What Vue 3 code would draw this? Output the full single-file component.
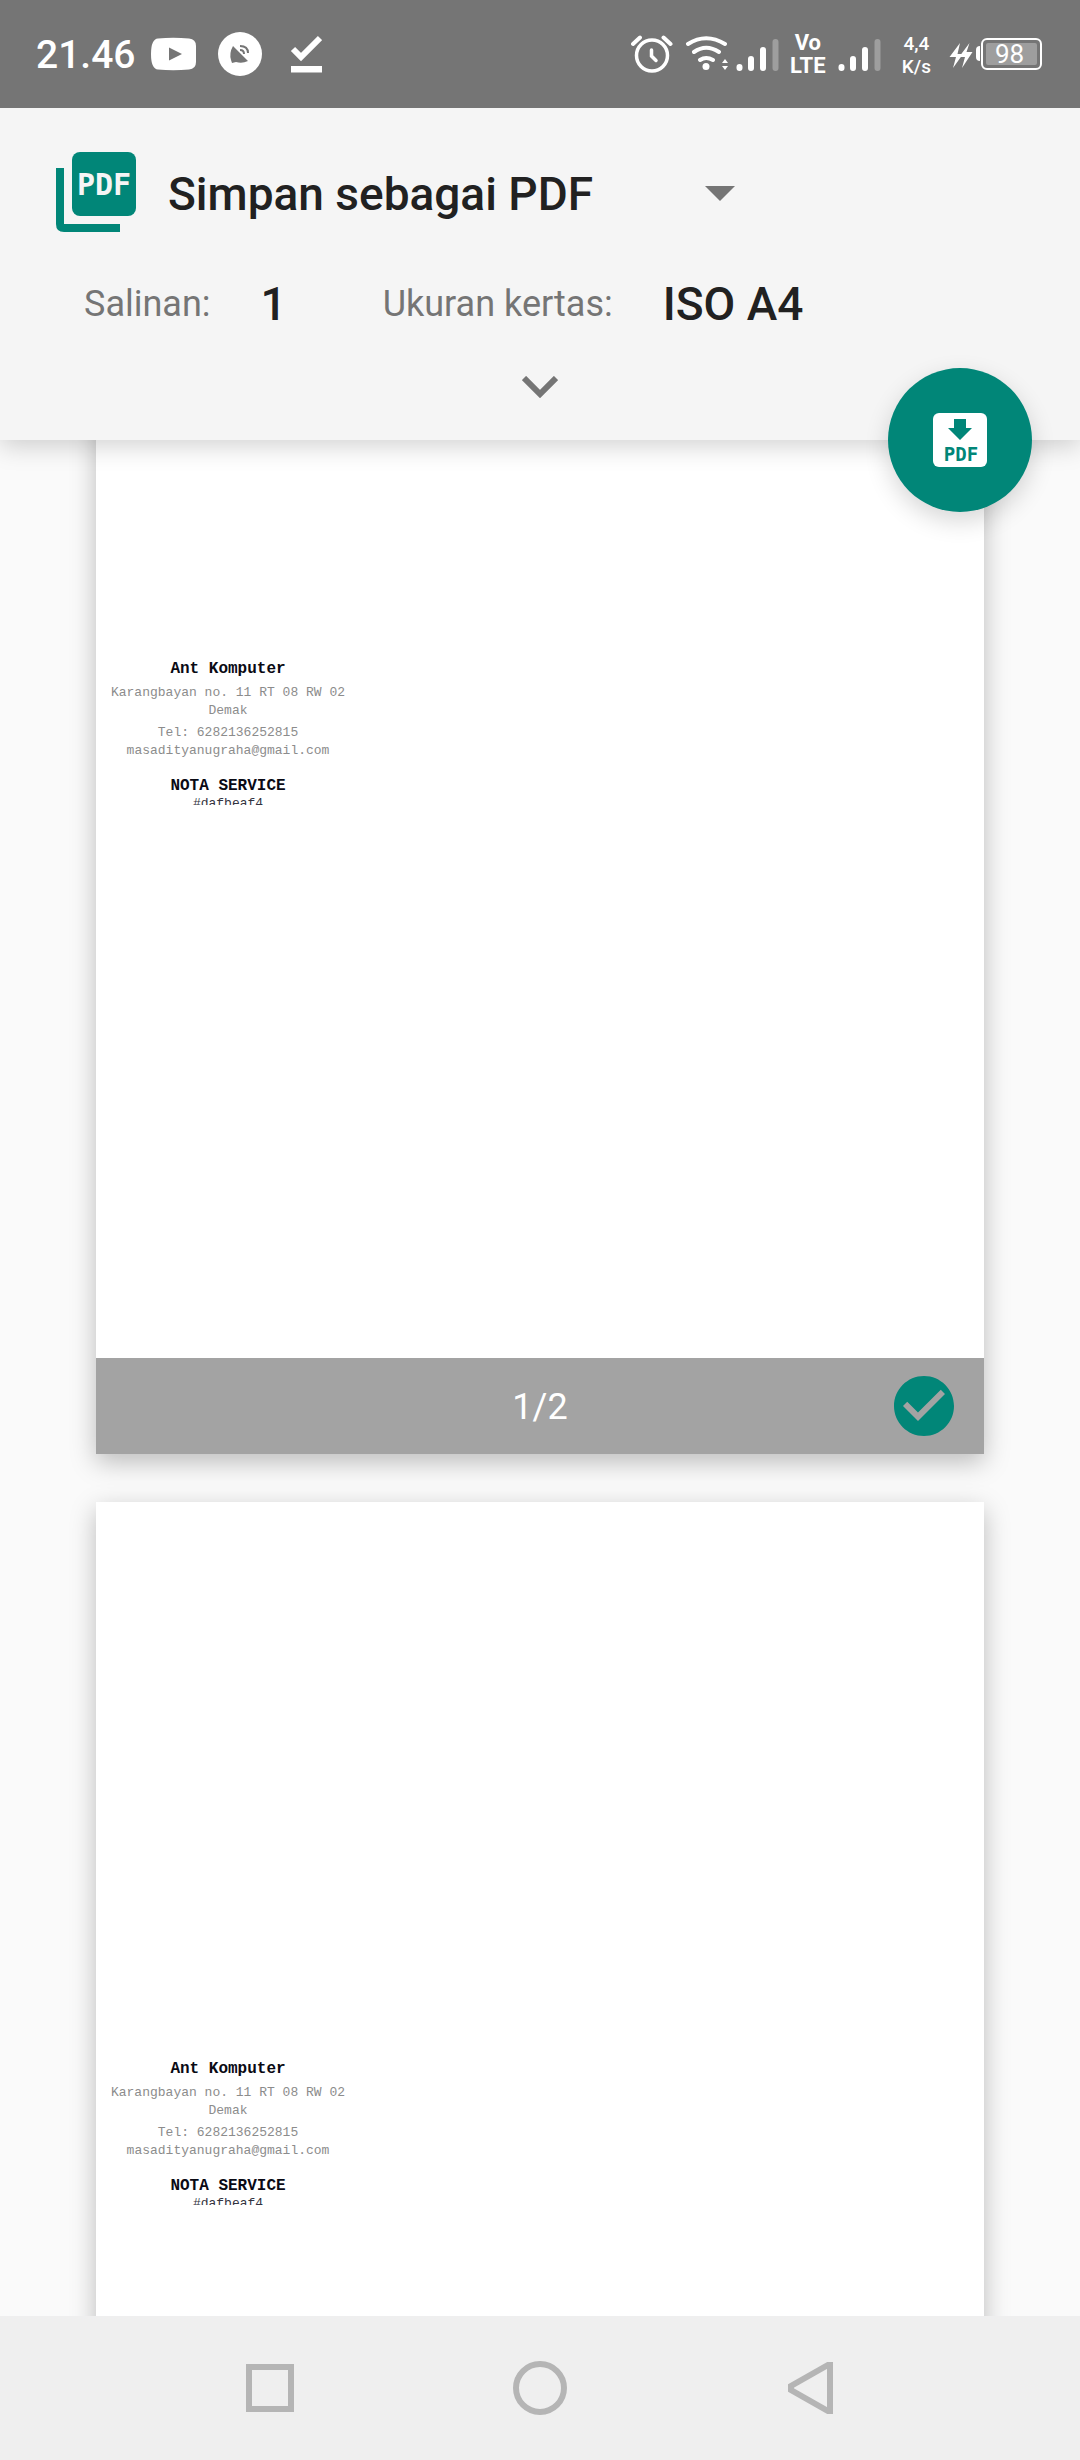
<script setup>
import { ref } from 'vue'

const destination = ref('Simpan sebagai PDF')
const pages = ref([
  { number: 1, selected: true },
  { number: 2, selected: true },
])
</script>

<template>
  <div class="screen">
    <div class="status-bar">
      <div class="status-left">
        <time class="clock">21.46</time>
        <svg class="i-video" width="46" height="44" viewBox="150 32 46 44">
          <path fill="#fff" fill-rule="evenodd" d="M158 38.500Q173 37 189 38.500Q196 39 196 46V62Q196 69 189 69.500Q173 71 158 69.500Q151 69 151 54Q151 39 158 38.500ZM169 47.500V60.500L182 54Z" />
        </svg>
        <svg class="i-satellite" width="44" height="44" viewBox="218 32 44 44">
          <circle cx="240" cy="54" r="22" fill="#fff" />
          <path fill="#757575" d="M233 46L248 61Q242 64 236 62L232 63L231 60Q229 53 233 46Z" />
          <path d="M240 50Q244 50 244 54M240 46Q248 46 248 53" fill="none" stroke="#757575" stroke-width="2" />
        </svg>
        <svg class="i-done" width="32" height="44" viewBox="290 32 32 44">
          <path d="M293 49L301 57L320 38" fill="none" stroke="#fff" stroke-width="6" />
          <path fill="#fff" d="M291 66h31v6.500h-31z" />
        </svg>
      </div>
      <div class="status-right">
        <svg width="42" height="44" viewBox="632 32 42 44" fill="none" stroke="#fff">
          <circle cx="653" cy="55.500" r="15.500" stroke-width="3.500" />
          <path d="M652.500 50V56L657 60.500" stroke-width="3.500" stroke-linecap="round" />
          <path d="M634 44L641 37.500M671.500 44L664.500 37.500" stroke-width="4" stroke-linecap="round" />
        </svg>
        <svg class="i-wifi" width="44" height="44" viewBox="686 32 44 44" fill="none" stroke="#fff" stroke-width="4" stroke-linecap="round">
          <path d="M689 44Q707 32.500 726 44M695 52Q707 43.500 720 52M701 60Q707 56 714 60" />
          <circle cx="707" cy="66.500" r="3.500" fill="#fff" stroke="none" />
          <path d="M726 59L729 63H723ZM726 70L729 66H723Z" fill="#fff" stroke="none" />
        </svg>
        <svg class="i-signal" width="44" height="44" viewBox="737 32 44 44" stroke="#fff" stroke-width="6" stroke-linecap="round">
          <path d="M740.500 67V68M752 59V68M764 50V68" />
          <path d="M776.500 42V68" stroke="#9e9e9e" />
        </svg>
        <span class="volte">Vo<br>LTE</span>
        <svg class="i-signal-2" width="44" height="44" viewBox="737 32 44 44" stroke="#fff" stroke-width="6" stroke-linecap="round">
          <path d="M740.500 67V68M752 59V68M764 50V68" />
          <path d="M776.500 42V68" stroke="#9e9e9e" />
        </svg>
        <span class="speed">4,4<br>K/s</span>
        <svg class="i-charge" width="24" height="44" viewBox="950 32 24 44" fill="#fff">
          <path d="M961 43L950.500 57H957L954 68L964 54H958.500ZM970.500 43L960 57H966L963 68L973.500 52H967.500Z" />
        </svg>
        <div class="battery"><span>98</span></div>
      </div>
    </div>

    <header class="options">
      <div class="destination">
        <svg class="pdf-logo" width="80" height="80" viewBox="0 0 80 80" fill="#018678">
          <path d="M0 16H8V72H64V80H8Q0 80 0 72Z" />
          <rect x="16" width="64" height="64" rx="8" />
          <text x="48" y="43" text-anchor="middle" fill="#f5f5f5" class="pdf-text" font-size="30">PDF</text>
        </svg>
        <div class="select-wrap">
          <select v-model="destination" aria-label="Printer">
            <option>Simpan sebagai PDF</option>
          </select>
          <svg class="arrow" width="30" height="16" viewBox="0 0 30 16"><path fill="#757575" d="M0 0H30L15 15Z" /></svg>
        </div>
      </div>
      <dl class="summary">
        <dt>Salinan:</dt>
        <dd class="copies">1</dd>
        <dt>Ukuran kertas:</dt>
        <dd>ISO A4</dd>
      </dl>
      <button class="expand" aria-label="Luaskan">
        <svg width="36" height="22" viewBox="0 0 36 22"><path d="M2 2L18 18L34 2" fill="none" stroke="#757575" stroke-width="6" /></svg>
      </button>
      <button class="fab" aria-label="Simpan ke PDF">
        <svg width="54" height="54" viewBox="0 0 54 54">
          <rect width="54" height="54" rx="6" fill="#fff" />
          <path d="M21 6H33V15H39L27 27L15 15H21Z" fill="#018678" />
          <text x="28" y="48" text-anchor="middle" fill="#018678" class="pdf-text" font-size="19">PDF</text>
        </svg>
      </button>
    </header>

    <main class="preview">
      <div class="pages">
        <article v-for="page in pages" :key="page.number" class="page">
          <div class="sheet">
            <div class="receipt">
              <h2>Ant Komputer</h2>
              <p class="address">Karangbayan no. 11 RT 08 RW 02 Demak</p>
              <p class="contact">Tel: 6282136252815<br>masadityanugraha@gmail.com</p>
              <h2>NOTA SERVICE</h2>
              <p class="code">#dafbeaf4</p>
            </div>
          </div>
          <label class="page-bar">
            <span>{{ page.number }}/{{ pages.length }}</span>
            <input v-model="page.selected" type="checkbox">
            <svg class="tick" width="72" height="72" viewBox="0 0 24 24" aria-hidden="true">
              <path fill="#018678" d="M12 2C6.480 2 2 6.480 2 12s4.480 10 10 10 10-4.480 10-10S17.520 2 12 2zm-2 15l-5-5 1.410-1.410L10 14.170l7.590-7.590L19 8l-9 9z" />
            </svg>
          </label>
        </article>
      </div>
    </main>

    <nav class="nav-bar">
      <button aria-label="Aplikasi terbaru">
        <svg width="54" height="54" viewBox="0 0 54 54"><rect x="6" y="6" width="42" height="42" /></svg>
      </button>
      <button aria-label="Beranda">
        <svg width="54" height="54" viewBox="0 0 54 54"><circle cx="27" cy="27" r="24" /></svg>
      </button>
      <button aria-label="Kembali">
        <svg width="54" height="54" viewBox="0 0 54 54"><path d="M47 4V50H45L8 29V25L45 4Z" /></svg>
      </button>
    </nav>
  </div>
</template>

<style>
body {
  background: #fafafa;
}
</style>

<style scoped>
.screen {
  display: flex;
  flex-direction: column;
  height: 100vh;
  overflow: hidden;
  background: #fafafa;
  font-family: Roboto, "Noto Sans", sans-serif;
  color: #212121;
}

svg {
  display: block;
  flex: none;
}

button {
  display: flex;
  align-items: center;
  justify-content: center;
  padding: 0;
  border: 0;
  background: none;
}

.status-bar {
  position: relative;
  z-index: 2;
  flex: none;
  display: flex;
  justify-content: space-between;
  height: 108px;
  padding: 0 38px 0 36px;
  background: #757575;
  color: #fff;
}

.status-left,
.status-right {
  display: flex;
  align-items: center;
}

.clock {
  padding-top: 2px;
  font-size: 39px;
  font-weight: 500;
  line-height: 48px;
}

.i-video {
  margin-left: 14px;
}

.i-satellite {
  margin-left: 22px;
}

.i-done {
  margin-left: 28px;
}

.i-wifi {
  margin-left: 12px;
}

.i-signal {
  margin-left: 7px;
}

.volte {
  width: 38px;
  margin-left: 9px;
  font-size: 22px;
  font-weight: 700;
  line-height: 23px;
  text-align: center;
}

.i-signal-2 {
  margin-left: 11px;
}

.speed {
  margin-left: 20px;
  padding-top: 2px;
  font-size: 19px;
  font-weight: 500;
  line-height: 23px;
  text-align: center;
}

.i-charge {
  margin-left: 18px;
}

.battery {
  position: relative;
  display: flex;
  box-sizing: border-box;
  width: 61px;
  height: 32px;
  margin-left: 8px;
  padding: 3px;
  border: 2px solid #fff;
  border-radius: 6px;
}

.battery::before {
  content: "";
  position: absolute;
  left: -7px;
  top: 6px;
  width: 4px;
  height: 15px;
  border-radius: 4px 0 0 4px;
  background: #fff;
}

.battery span {
  flex: 1;
  padding-right: 4px;
  border-radius: 2px;
  background: #9e9e9e;
  font-size: 26px;
  line-height: 23px;
  text-align: center;
}

.options {
  position: relative;
  z-index: 1;
  flex: none;
  padding: 36px 0 12px;
  background: #f5f5f5;
  box-shadow: 0 6px 24px rgba(0, 0, 0, 0.18);
}

.destination {
  display: flex;
  align-items: center;
  height: 96px;
  padding-left: 56px;
}

.pdf-text {
  font-family: "DejaVu Sans Mono", monospace;
  font-weight: 700;
}

.select-wrap {
  position: relative;
  width: 567px;
  margin-left: 32px;
}

select {
  width: 100%;
  height: 72px;
  padding: 4px 0 0;
  border: 0;
  appearance: none;
  background: none;
  font-family: inherit;
  font-size: 46px;
  font-weight: 500;
  color: #212121;
}

.arrow {
  position: absolute;
  right: 0;
  top: 30px;
  pointer-events: none;
}

.summary {
  display: flex;
  align-items: center;
  height: 84px;
  margin: 22px 0 0;
  padding-left: 84px;
}

dt {
  font-size: 36px;
  color: #757575;
}

dd {
  margin: 0 0 0 50px;
  font-size: 46px;
  font-weight: 500;
}

.copies {
  margin-right: 96px;
}

.expand {
  width: 96px;
  height: 82px;
  margin: 0 auto;
}

.fab {
  position: absolute;
  right: 48px;
  bottom: -72px;
  width: 144px;
  height: 144px;
  border-radius: 50%;
  background: #018678;
  box-shadow: 0 9px 24px rgba(0, 0, 0, 0.16);
}

.preview {
  flex: 1;
  min-height: 0;
  overflow: hidden;
}

/* The list rests scrolled part-way through the first page. */
.pages {
  display: flex;
  flex-direction: column;
  gap: 48px;
  margin: -338px 96px 0;
}

.page {
  box-shadow: 0 8px 24px rgba(0, 0, 0, 0.25);
}

.sheet {
  box-sizing: border-box;
  aspect-ratio: 210 / 297;
  padding-top: 558px;
  background: #fff;
}

.receipt {
  width: 264px;
  height: 145px;
  overflow: hidden;
  font-family: "Liberation Mono", monospace;
  font-size: 13px;
  line-height: 18px;
  text-align: center;
  color: #8c8c8c;
}

.receipt h2 {
  margin: 0;
  font-size: 16px;
  color: #0a0a14;
}

.receipt p {
  margin: 0;
}

.receipt .address {
  margin: 6px 0 4px;
}

.receipt .contact {
  margin-bottom: 17px;
}

.receipt .code {
  color: #333340;
}

.page-bar {
  position: relative;
  display: flex;
  align-items: center;
  justify-content: center;
  box-sizing: border-box;
  height: 96px;
  background: #a3a3a3;
  font-size: 36px;
  color: #fff;
}

.page-bar span {
  padding-top: 3px;
}

.page-bar input {
  position: absolute;
  right: 24px;
  width: 72px;
  height: 72px;
  margin: 0;
  opacity: 0;
}

.tick {
  position: absolute;
  right: 24px;
  visibility: hidden;
  pointer-events: none;
}

input:checked + .tick {
  visibility: visible;
}

.nav-bar {
  position: relative;
  z-index: 1;
  flex: none;
  display: grid;
  grid-template-columns: repeat(3, 270px);
  justify-content: center;
  height: 144px;
  background: #efefef;
}

.nav-bar svg {
  fill: none;
  stroke: #b5b5b5;
  stroke-width: 6px;
}
</style>
